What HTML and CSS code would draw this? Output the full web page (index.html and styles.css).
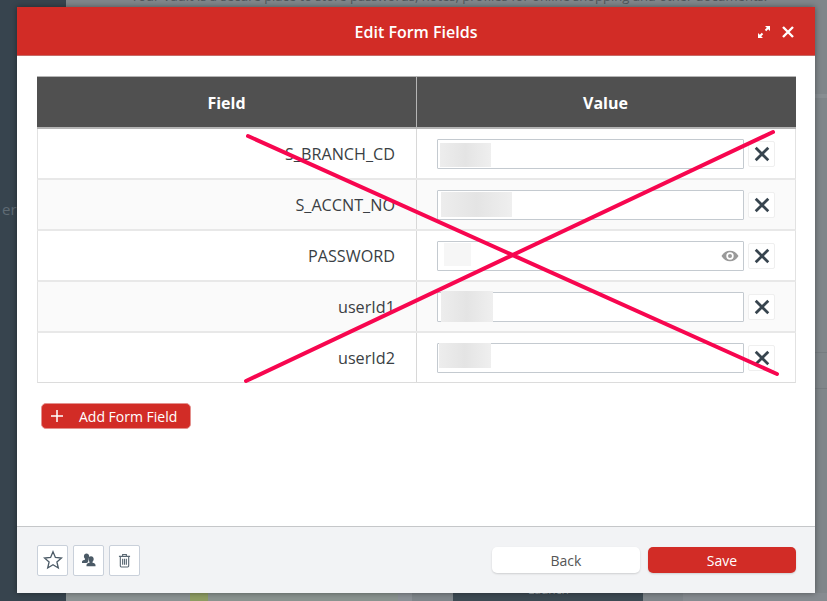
FILE: index.html
```html
<!DOCTYPE html>
<html lang="en">
<head>
<meta charset="utf-8">
<title>Edit Form Fields</title>
<link rel="stylesheet" href="styles.css">
</head>
<body>
<div class="backdrop">
  <aside class="bg-side"><span class="bg-side-text">er</span></aside>
  <main class="bg-main">
    <p class="bg-note">Your Vault is a secure place to store passwords, notes, profiles for online shopping and other documents.</p>
    <div class="bg-bottom">
      <span class="seg seg-a"></span><span class="seg seg-plant"></span><span class="seg seg-b"></span><span class="seg seg-c"></span><span class="seg seg-d"></span>
      <span class="seg seg-dark"><span class="bg-launch">Launch</span></span>
      <span class="seg seg-e"></span><span class="seg seg-f"></span>
    </div>
  </main>
</div>
<section class="modal">
  <header class="modal-head">
    <h1 class="modal-title">Edit Form Fields</h1>
    <div class="head-icons">
      <svg class="icon-expand" viewBox="0 0 14 14" width="14" height="14"><path d="M8 1h5v5l-1.800-1.800-2 2-1.400-1.400 2-2zM6 13H1V8l1.800 1.800 2-2 1.400 1.400-2 2z" fill="#fff"/></svg>
      <svg class="icon-close" viewBox="0 0 14 14" width="14" height="14"><path d="M2 2l10 10M12 2L2 12" stroke="#fff" stroke-width="2.400" fill="none"/></svg>
    </div>
  </header>
  <div class="modal-body">
    <div class="fields">
      <div class="cell-head cell-head-field">Field</div>
      <div class="cell-head cell-head-value">Value</div>

      <div class="row">
        <div class="cell-name">S_BRANCH_CD</div>
        <div class="cell-value">
          <div class="input"><span class="blur blur-1"></span></div>
          <button class="del"><svg viewBox="0 0 14 14" width="16" height="16"><path d="M1.500 1.500l11 11M12.500 1.500l-11 11" stroke="#37444e" stroke-width="2.400" fill="none"/></svg></button>
        </div>
      </div>
      <div class="row row-alt">
        <div class="cell-name">S_ACCNT_NO</div>
        <div class="cell-value">
          <div class="input"><span class="blur blur-2"></span></div>
          <button class="del"><svg viewBox="0 0 14 14" width="16" height="16"><path d="M1.500 1.500l11 11M12.500 1.500l-11 11" stroke="#37444e" stroke-width="2.400" fill="none"/></svg></button>
        </div>
      </div>
      <div class="row">
        <div class="cell-name">PASSWORD</div>
        <div class="cell-value">
          <div class="input"><span class="blur blur-3"></span>
            <svg class="eye" viewBox="0 0 18 12" width="18" height="12"><path fill-rule="evenodd" d="M0.500 6C2.500 2.500 5.500 0.800 9 0.800s6.500 1.700 8.500 5.200c-2 3.500-5 5.200-8.500 5.200S2.500 9.500 0.500 6zM9 2.300a3.700 3.700 0 1 0 0 7.400 3.700 3.700 0 0 0 0-7.400z" fill="#9a9a9a"/><circle cx="9" cy="6" r="2" fill="#9a9a9a"/></svg>
          </div>
          <button class="del"><svg viewBox="0 0 14 14" width="16" height="16"><path d="M1.500 1.500l11 11M12.500 1.500l-11 11" stroke="#37444e" stroke-width="2.400" fill="none"/></svg></button>
        </div>
      </div>
      <div class="row row-alt">
        <div class="cell-name">userId1</div>
        <div class="cell-value">
          <div class="input"><span class="blur blur-4"></span></div>
          <button class="del"><svg viewBox="0 0 14 14" width="16" height="16"><path d="M1.500 1.500l11 11M12.500 1.500l-11 11" stroke="#37444e" stroke-width="2.400" fill="none"/></svg></button>
        </div>
      </div>
      <div class="row row-last">
        <div class="cell-name">userId2</div>
        <div class="cell-value">
          <div class="input"><span class="blur blur-5"></span></div>
          <button class="del"><svg viewBox="0 0 14 14" width="16" height="16"><path d="M1.500 1.500l11 11M12.500 1.500l-11 11" stroke="#37444e" stroke-width="2.400" fill="none"/></svg></button>
        </div>
      </div>
    </div>
    <button class="add-btn">
      <svg viewBox="0 0 12 12" width="12" height="12"><path d="M6 0v12M0 6h12" stroke="#fff" stroke-width="1.500" fill="none"/></svg>
      <span>Add Form Field</span>
    </button>
  </div>
  <footer class="modal-foot">
    <div class="foot-tools">
      <button class="tool"><svg viewBox="0 0 20 20" width="20" height="20"><path d="M10 1.800l2.400 5.700 6.100.5-4.600 4 1.400 6L10 14.800 4.700 18l1.400-6-4.600-4 6.100-.5z" fill="none" stroke="#4b5a66" stroke-width="1.300"/></svg></button>
      <button class="tool"><svg viewBox="0 0 15 14" width="15" height="14"><path d="M5.500 0.500C7 .5 8.200 1.600 8.200 3.300c0 .5-.1 1-.3 1.500-.6.800-.9 1.700-.9 2.700 0 .5.100 1 .3 1.400-.5.300-1.100.6-1.700 1.100H1v-1.300c0-.8 1.300-1.500 3-1.900v-1C3.300 5.200 2.900 4.300 2.900 3.300 2.900 1.600 4 .5 5.500 .5z" fill="#4b5a66"/><path d="M10 3.300c1.600 0 2.700 1.200 2.700 2.800 0 1.100-.5 2.100-1.200 2.700v1c1.700.4 3 1.100 3 2.100v1.400H5.500v-1.400c0-1 1.300-1.700 3-2.100v-1C7.800 8.200 7.300 7.200 7.300 6.100 7.300 4.500 8.400 3.300 10 3.300z" fill="#4b5a66"/></svg></button>
      <button class="tool"><svg viewBox="0 0 14 16" width="13" height="15"><path d="M1 3.500h12M5 3.500V1.500h4v2M2.500 3.500v10.500c0 .6.400 1 1 1h7c.6 0 1-.4 1-1V3.500M5 6v6.500M7 6v6.500M9 6v6.500" fill="none" stroke="#5a6873" stroke-width="1.200"/></svg></button>
    </div>
    <div class="foot-actions">
      <button class="btn btn-back">Back</button>
      <button class="btn btn-save">Save</button>
    </div>
  </footer>
</section>
<svg class="cross" viewBox="0 0 827 601" width="827" height="601"><path d="M248 136L777 374M773 132L246 381" stroke="#f7064f" stroke-width="4" stroke-linecap="round" fill="none"/></svg>
</body>
</html>
```

FILE: styles.css
```css
* { box-sizing: border-box; }
html, body { margin: 0; padding: 0; height: 100%; }
body {
  width: 827px;
  height: 601px;
  overflow: hidden;
  position: relative;
  font-family: "Open Sans", "Noto Sans", sans-serif;
  background: #80868a;
}
.backdrop { display: flex; height: 601px; }
.bg-side {
  width: 66px;
  background: #37444e;
  display: flex;
  align-items: center;
  color: #5f6b74;
  font-size: 15px;
  padding-bottom: 184px;
}
.bg-side-text { margin-left: 2px; }
.bg-main {
  flex: 1;
  display: flex;
  flex-direction: column;
  justify-content: space-between;
  min-width: 0;
  background: linear-gradient(180deg, #80868a 0 94px, #888e92 94px 98px, #80868a 98px 352px, #767c80 352px 353px, #80868a 353px 388px, #767c80 388px 389px, #80868a 389px);
}
.bg-note {
  margin: -12px 0 0 65px;
  color: #50575c;
  font-size: 13px;
  line-height: 17px;
  white-space: nowrap;
}
.bg-bottom {
  height: 8px;
  display: flex;
}
.seg { display: block; height: 8px; position: relative; }
.seg-a { width: 124px; background: #8b9293; }
.seg-plant { width: 18px; background: #8e9c62; }
.seg-b { width: 190px; background: #8a938f; }
.seg-c { width: 14px; background: #8b9096; }
.seg-d { width: 41px; background: #7f858a; }
.seg-dark { width: 190px; background: #3d4a53; }
.seg-e { width: 40px; background: #7f858a; }
.seg-f { width: 144px; background: #868b90; }
.bg-launch {
  position: absolute;
  left: 75px;
  top: -12px;
  font-size: 12px;
  line-height: 18px;
  color: #8b949a;
}
.modal {
  position: absolute;
  left: 17px;
  top: 7px;
  width: 798px;
  height: 586px;
  display: flex;
  flex-direction: column;
  background: #fff;
  box-shadow: 0 0 6px rgba(0, 0, 0, 0.4);
}
.modal-head {
  height: 49px;
  flex: none;
  background: #d22c26;
  border-bottom: 1px solid #c76a66;
  display: flex;
  align-items: center;
  justify-content: center;
  position: relative;
}
.modal-title {
  margin: 0;
  color: #fff;
  font-size: 16px;
  font-weight: 600;
  line-height: 22px;
  position: relative;
  top: 1px;
}
.head-icons {
  position: absolute;
  right: 20px;
  top: 18px;
  display: flex;
  gap: 10px;
  align-items: center;
}
.icon-expand, .icon-close { display: block; }
.modal-body {
  flex: 1;
  padding: 20px 19px 0 20px;
  min-height: 0;
}
.fields {
  display: grid;
  grid-template-columns: 380px 379px;
  border-top: 1px solid #b5b5b5;
}
.cell-head {
  height: 52px;
  background: #505050;
  color: #fff;
  font-size: 16px;
  font-weight: 700;
  display: flex;
  align-items: center;
  justify-content: center;
  border-bottom: 2px solid #b5b5b5;
  padding-top: 2px;
}
.cell-head-field { border-right: 1px solid #b5b5b5; }
.cell-head-value { padding-right: 2px; }
.row {
  display: grid;
  grid-template-columns: subgrid;
  grid-column: 1 / 3;
  height: 51px;
  border-bottom: 2px solid #e8e8e8;
  border-left: 1px solid #e2e2e2;
  border-right: 1px solid #e2e2e2;
  background: #fff;
}
.row-alt { background: #fafafa; }
.row-last { border-bottom: 1px solid #dcdcdc; height: 50px; }
.cell-name {
  display: flex;
  align-items: center;
  justify-content: flex-end;
  padding: 0 21px 0 0;
  border-right: 1px solid #d8d8d8;
  color: #3a3f44;
  font-size: 16.2px;
  font-weight: 500;
}
.cell-value {
  display: flex;
  align-items: center;
  padding: 1px 0 0 20px;
  gap: 4px;
}
.input {
  width: 307px;
  height: 30px;
  background: #fff;
  border: 1px solid #c4cad0;
  border-radius: 1px;
  position: relative;
  display: flex;
  align-items: center;
}
.blur {
  position: absolute;
  background: linear-gradient(90deg, #ededed, #e4e4e4 50%, #efefef);
}
.blur-1 { left: 2px; top: 3px; width: 51px; height: 24px; }
.blur-2 { left: 3px; top: 1px; width: 71px; height: 25px; }
.blur-3 { left: 6px; top: 1px; width: 27px; height: 23px; background: #f6f6f6; }
.blur-4 { left: 3px; top: -2px; width: 52px; height: 31px; }
.blur-5 { left: 1px; top: -1px; width: 52px; height: 25px; }
.eye { position: absolute; right: 4px; top: 8px; }
.del {
  width: 27px;
  height: 26px;
  padding: 0;
  background: #fff;
  border: 1px solid #efefef;
  border-radius: 2px;
  display: flex;
  align-items: center;
  justify-content: center;
}
.add-btn {
  margin: 20px 0 0 4px;
  width: 150px;
  height: 26px;
  border: 1px solid #e4918e;
  border-radius: 5px;
  background: #d22c26;
  color: #fff;
  font-family: inherit;
  font-size: 14px;
  display: flex;
  align-items: center;
  gap: 16px;
  padding: 0 0 0 9px;
}
.modal-foot {
  height: 67px;
  flex: none;
  background: #f2f3f5;
  border-top: 1px solid #c5c7c9;
  display: flex;
  align-items: center;
  justify-content: space-between;
  padding: 0 19px 0 20px;
}
.foot-tools { display: flex; gap: 5px; }
.tool {
  width: 31px;
  height: 31px;
  padding: 0;
  background: #fff;
  border: 1px solid #c9d0da;
  border-radius: 2px;
  display: flex;
  align-items: center;
  justify-content: center;
}
.foot-actions { display: flex; gap: 8px; }
.btn {
  width: 148px;
  height: 26px;
  border: 0;
  border-radius: 5px;
  font-family: inherit;
  font-size: 14px;
  box-shadow: 0 1px 2px rgba(0, 0, 0, 0.15);
}
.btn-back { background: #fff; color: #555; }
.btn-save { background: #d22c26; color: #fff; }
.cross {
  position: absolute;
  left: 0;
  top: 0;
  pointer-events: none;
}
```
